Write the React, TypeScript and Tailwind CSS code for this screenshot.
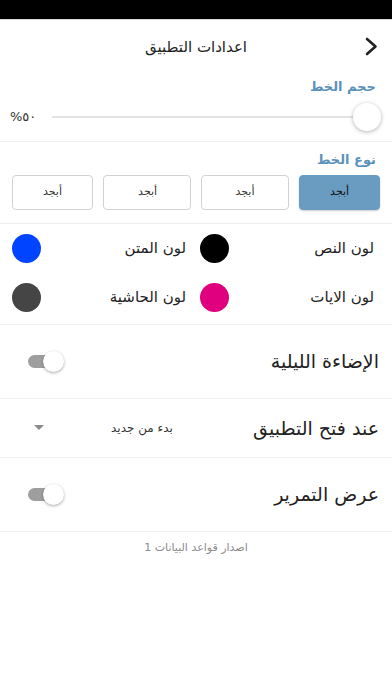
import { useState } from "react";

const fonts = [
  { label: "أبجد", family: "'DejaVu Serif', serif" },
  { label: "أبجد", family: "'DejaVu Sans', sans-serif" },
  { label: "أبجد", family: "'DejaVu Serif', serif" },
  { label: "أبجد", family: "'DejaVu Sans', sans-serif" },
];

function Toggle({ on, onClick }: { on: boolean; onClick: () => void }) {
  return (
    <button onClick={onClick} className="relative h-[21px] w-[36px]" aria-pressed={on}>
      <span className="absolute left-0 top-[4px] h-[13px] w-[28px] rounded-full bg-[#9e9e9e]" />
      <span className="absolute left-[15px] top-0 h-[21px] w-[21px] rounded-full bg-white shadow-[0_1px_3px_rgba(0,0,0,0.35)]" />
    </button>
  );
}

function ColorCell({ label, color }: { label: string; color: string }) {
  return (
    <div className="flex flex-1 items-center justify-between">
      <span className="text-[15px] text-[#222]">{label}</span>
      <span className="h-[29px] w-[29px] rounded-full" style={{ backgroundColor: color }} />
    </div>
  );
}

export default function App() {
  const [selected, setSelected] = useState(0);
  const [night, setNight] = useState(false);
  const [scroll, setScroll] = useState(false);

  return (
    <div dir="rtl" className="min-h-[696px] bg-white font-['DejaVu_Sans',sans-serif] text-[#222]">
      <div className="h-[19px] bg-black" />
      <div className="h-px bg-[#d8d8d8]" />

      {/* header */}
      <div className="relative flex h-[55px] items-center justify-center">
        <button className="absolute right-[14px] top-[17px]" aria-label="back">
          <svg width="13" height="19" viewBox="0 0 13 19" fill="none">
            <path d="M2 2 L10.5 9.5 L2 17" stroke="#222" strokeWidth="2.6" strokeLinecap="round" strokeLinejoin="round" />
          </svg>
        </button>
        <h1 className="text-[15px]">اعدادات التطبيق</h1>
      </div>

      {/* font size */}
      <div className="px-[16px] pt-[2px]">
        <p className="text-[13px] font-bold text-[#5b92bb]">حجم الخط</p>
        <div className="flex h-[40px] items-center gap-[16px]">
          <div className="relative h-[28px] flex-1">
            <span className="absolute left-0 right-[4px] top-[13px] h-[2px] bg-[#e3e3e3]" />
            <span className="absolute right-[-5px] top-0 h-[28px] w-[28px] rounded-full bg-white shadow-[0_1px_4px_rgba(0,0,0,0.3)]" />
          </div>
          <span className="ml-[-6px] text-[13px] text-[#333]">٥٠%</span>
        </div>
      </div>
      <div className="mt-[4px] h-px bg-[#f0f0f0]" />

      {/* font type */}
      <div className="px-[12px] pt-[8px] pb-[13px]">
        <p className="pr-[4px] text-[13px] font-bold text-[#5b92bb]">نوع الخط</p>
        <div className="mt-[6px] flex justify-between">
          {fonts.map((f, i) => (
            <button
              key={i}
              onClick={() => setSelected(i)}
              className={`flex h-[35px] items-center justify-center rounded-[4px] border text-[11px] ${
                i === 0 ? "w-[81px]" : i === 3 ? "w-[81px]" : "w-[88px]"
              } ${selected === i ? "border-[#6a9cc2] bg-[#6a9cc2] text-[#111] shadow-[0_1px_2px_rgba(0,0,0,0.2)]" : "border-[#d2d2d2] bg-white text-[#333]"}`}
              style={{ fontFamily: f.family }}
            >
              {f.label}
            </button>
          ))}
        </div>
      </div>
      <div className="h-px bg-[#eeeeee]" />

      {/* colors */}
      <div className="flex flex-col gap-[20px] px-[12px] py-[10px] pr-[18px]">
        <div className="flex gap-[14px]">
          <ColorCell label="لون النص" color="#000000" />
          <ColorCell label="لون المتن" color="#0044ff" />
        </div>
        <div className="flex gap-[14px]">
          <ColorCell label="لون الايات" color="#e0007f" />
          <ColorCell label="لون الحاشية" color="#454545" />
        </div>
      </div>
      <div className="mt-[2px] h-px bg-[#efefef]" />

      {/* settings rows */}
      <div className="flex h-[73px] items-center justify-between pr-[13px] pl-[28px]">
        <span className="text-[19px]">الإضاءة الليلية</span>
        <Toggle on={night} onClick={() => setNight(!night)} />
      </div>
      <div className="h-px bg-[#efefef]" />
      <div className="flex h-[58px] items-center justify-between pr-[13px] pl-[34px]">
        <span className="text-[19px]">عند فتح التطبيق</span>
        <div className="flex items-center gap-[67px]">
          <span className="text-[12px] text-[#333]">بدء من جديد</span>
          <svg width="10" height="6" viewBox="0 0 10 6">
            <path d="M0 0 L10 0 L5 5 Z" fill="#8a8a8a" />
          </svg>
        </div>
      </div>
      <div className="h-px bg-[#efefef]" />
      <div className="flex h-[73px] items-center justify-between pr-[13px] pl-[28px]">
        <span className="text-[19px]">عرض التمرير</span>
        <Toggle on={scroll} onClick={() => setScroll(!scroll)} />
      </div>
      <div className="h-px bg-[#efefef]" />

      <p className="mt-[8px] text-center text-[11px] text-[#8c8c8c]">اصدار قواعد البيانات 1</p>
    </div>
  );
}
